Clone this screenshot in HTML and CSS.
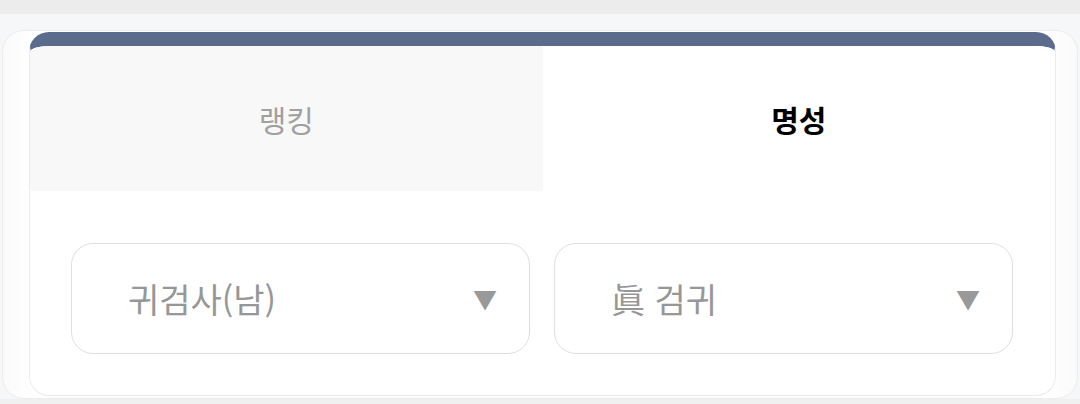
FILE: index.html
```html
<!DOCTYPE html>
<html lang="ko">
  <head>
    <meta charset="UTF-8">
    <title>명성</title>
    <link rel="stylesheet" href="styles.css">
  </head>
  <body>
    <div id="topbar"></div>
    <div id="wrap">
      <div class="outer">
        <div class="card">
          <div class="tabs">
            <div class="tab">랭킹</div>
            <div class="tab active">명성</div>
          </div>
          <div class="filters">
            <div class="select">
              <span>귀검사(남)</span>
              <span class="arrow">▼</span>
            </div>
            <div class="select">
              <span>眞 검귀</span>
              <span class="arrow">▼</span>
            </div>
          </div>
        </div>
      </div>
    </div>
    <div id="bottombar"></div>
  </body>
</html>
```

FILE: styles.css
```css
* {padding: 0; margin: 0; box-sizing: border-box}
body {
  background: #f6f7f9;
  font-family: "Noto Sans CJK KR", "Noto Sans", sans-serif;
  overflow: hidden;
}
#topbar {
  height: 14px;
  background: #ececec;
}
#wrap {
  padding: 16px 2px 0 2px;
}
.outer {
  border: solid 1px #eeece8;
  border-radius: 22px;
  background: linear-gradient(90deg, #fafafa, #ffffff 3%, #ffffff 97%, #fafafa);
  padding: 1px 21px 2px 26px;
}
.card {
  background: #fff;
  border: solid 1px #ebebeb;
  border-top: solid 14px #5b6b8c;
  border-radius: 20px;
  overflow: hidden;
}
.tabs {
  display: grid;
  grid-template-columns: 1fr 1fr;
  height: 145px;
}
.tab {
  display: flex;
  align-items: center;
  justify-content: center;
  font-size: 30px;
  color: #a0a0a0;
  background: #f8f8f8;
}
.tab.active {
  background: #fff;
  color: #000;
  font-weight: bold;
}
.filters {
  display: grid;
  grid-template-columns: 1fr 1fr;
  gap: 24px;
  padding: 52px 42px 41px 41px;
}
.select {
  height: 111px;
  border: solid 1px #dcdfe4;
  border-radius: 22px;
  display: flex;
  align-items: center;
  justify-content: space-between;
  padding: 0 32px 0 56px;
  font-size: 34px;
  color: #979797;
}
.arrow {
  font-size: 24px;
  color: #999;
}
#bottombar {
  height: 10px;
  background: #f0f0f0;
}
```
